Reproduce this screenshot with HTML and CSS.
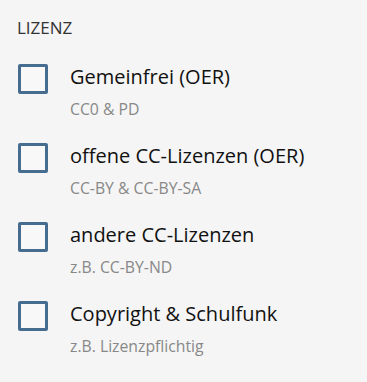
FILE: index.html
```html
<!DOCTYPE html>
<html lang="de">
<head>
<meta charset="utf-8">
<link rel="stylesheet" href="styles.css">
</head>
<body>
<section class="filter">
  <h2 class="filter-title">LIZENZ</h2>
  <ul class="options">
    <li class="option">
      <span class="box"></span>
      <div class="label">
        <div class="name">Gemeinfrei (OER)</div>
        <div class="sub">CC0 &amp; PD</div>
      </div>
    </li>
    <li class="option">
      <span class="box"></span>
      <div class="label">
        <div class="name">offene CC-Lizenzen (OER)</div>
        <div class="sub">CC-BY &amp; CC-BY-SA</div>
      </div>
    </li>
    <li class="option">
      <span class="box"></span>
      <div class="label">
        <div class="name">andere CC-Lizenzen</div>
        <div class="sub">z.B. CC-BY-ND</div>
      </div>
    </li>
    <li class="option">
      <span class="box"></span>
      <div class="label">
        <div class="name">Copyright &amp; Schulfunk</div>
        <div class="sub">z.B. Lizenzpflichtig</div>
      </div>
    </li>
  </ul>
</section>
</body>
</html>
```

FILE: styles.css
```css
html, body {
  margin: 0;
  padding: 0;
  background: #f5f5f5;
}
body {
  font-family: "Open Sans", "Noto Sans", sans-serif;
  color: #111;
}
.filter {
  padding: 17px 18px 0 18px;
}
.filter-title {
  margin: 0;
  font-size: 17px;
  font-weight: 400;
  color: #333;
  line-height: 22px;
  margin-left: -1px;
}
.options {
  list-style: none;
  margin: 25px 0 0 0;
  padding: 0;
  display: flex;
  flex-direction: column;
  gap: 24px;
}
.option {
  display: flex;
  align-items: flex-start;
  gap: 22px;
}
.box {
  width: 30px;
  height: 30px;
  box-sizing: border-box;
  border: 3px solid #466c8f;
  border-radius: 2px;
  background: #f8f8f8;
  flex: none;
}
.label {
  display: flex;
  flex-direction: column;
}
.name {
  font-size: 20px;
  line-height: 26px;
}
.sub {
  font-size: 15.75px;
  line-height: 20px;
  color: #888;
  margin-top: 9px;
}
```
